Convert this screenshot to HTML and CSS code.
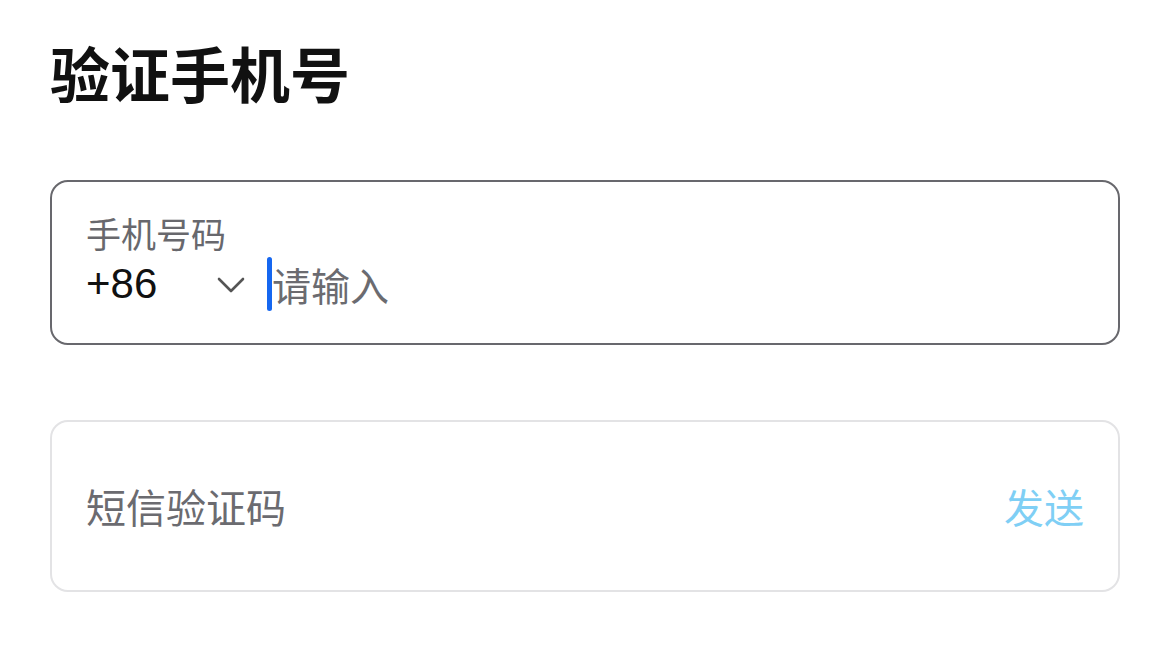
FILE: index.html
```html
<!DOCTYPE html>
<html lang="zh-CN">
<head>
    <meta charset="UTF-8">
    <meta name="viewport" content="width=device-width, initial-scale=1.0">
    <title>验证手机号</title>
    <link rel="stylesheet" href="styles.css">
</head>
<body>
    <div class="page">
        <h1 class="title">验证手机号</h1>

        <!-- phone number -->
        <div class="field field-active">
            <div class="field-label">手机号码</div>
            <div class="phone-row">
                <div class="country">
                    <span class="code">+86</span>
                    <svg class="chevron" width="28" height="18" viewBox="0 0 28 18">
                        <path d="M2 3 L14 15 L26 3" fill="none" stroke="#555" stroke-width="2.6" stroke-linecap="round" stroke-linejoin="round"/>
                    </svg>
                </div>
                <span class="cursor"></span>
                <span class="placeholder">请输入</span>
            </div>
        </div>

        <!-- sms code -->
        <div class="field field-code">
            <span class="placeholder code-placeholder">短信验证码</span>
            <span class="send">发送</span>
        </div>
    </div>
</body>
</html>
```

FILE: styles.css
```css
body {
    margin: 0;
    background: #fff;
    font-family: "Noto Sans CJK SC", "Noto Sans", sans-serif;
}
.page {
    padding: 28px 50px 0 50px;
}
.title {
    margin: 0;
    font-size: 60px;
    font-weight: 700;
    line-height: 88px;
    color: #111;
}
.field {
    box-sizing: border-box;
    border-radius: 18px;
    padding-left: 34px;
    padding-right: 34px;
}
.field-active {
    margin-top: 64px;
    height: 165px;
    border: 2px solid #68686d;
    padding-top: 28px;
}
.field-label {
    font-size: 35px;
    line-height: 46px;
    color: #68686d;
}
.phone-row {
    display: flex;
    align-items: center;
    height: 56px;
}
.country {
    display: flex;
    align-items: center;
    width: 180px;
}
.code {
    font-family: "Liberation Sans", Arial, sans-serif;
    font-size: 42px;
    color: #111;
    width: 131px;
}
.chevron {
    margin-top: 2px;
}
.cursor {
    width: 5px;
    height: 54px;
    border-radius: 3px;
    background: #1667f0;
    margin-left: 1px;
}
.placeholder {
    font-size: 39px;
    color: #6b6b70;
}
.code-placeholder {
    font-size: 40px;
}
.field-code {
    margin-top: 75px;
    height: 172px;
    border: 2px solid #e3e3e5;
    display: flex;
    align-items: center;
    justify-content: space-between;
}
.send {
    font-size: 40px;
    color: #7fcff5;
}
```
